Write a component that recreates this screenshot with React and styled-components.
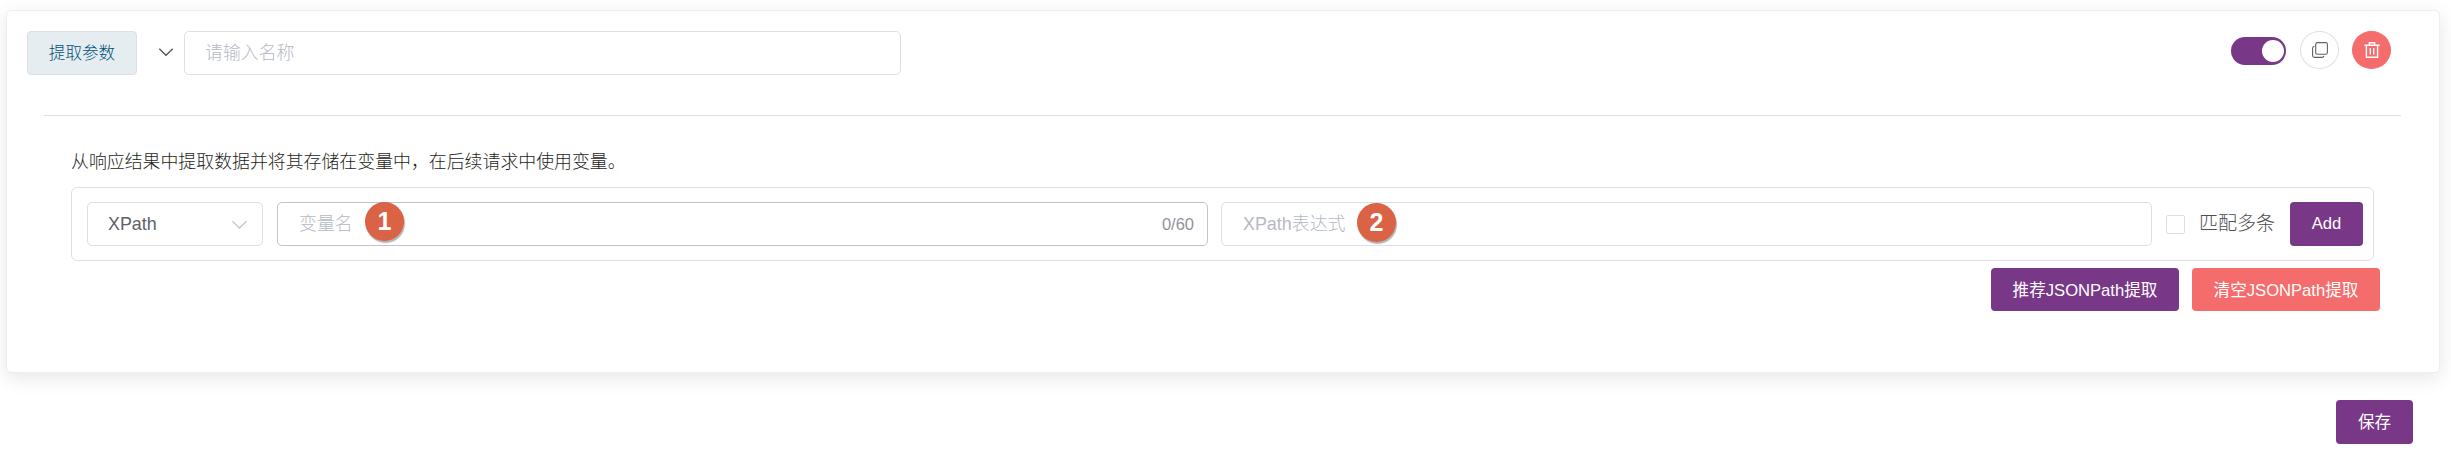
import React from "react";
import styled, { createGlobalStyle } from "styled-components";

const GlobalStyle = createGlobalStyle`
  *, *::before, *::after { box-sizing: border-box; }
  body {
    margin: 0;
    background: #fff;
    color: #1d1e20;
    font-family: "Liberation Sans", "Noto Sans CJK SC", sans-serif;
    font-size: 17.9px;
    font-weight: 300;
  }
`;

const Page = styled.main`
  height: 459px;
  padding: 10px 11px 0 6px;
  overflow: hidden;
`;

const Card = styled.section`
  height: 363px;
  border: 1px solid #ebeef5;
  border-radius: 5px;
  background: #fff;
  box-shadow: 0 5px 20px rgba(0, 0, 0, 0.1);
`;

const Header = styled.header`
  display: flex;
  align-items: flex-start;
  padding: 20px 48px 0 20px;
`;

const StepTag = styled.button`
  width: 110px;
  height: 44px;
  padding: 0 0 2px 0;
  border: 1px solid #dcdfe6;
  border-radius: 4px;
  background: #e6edf0;
  color: #00507c;
  font: inherit;
  font-size: 16.6px;
`;

const Chevron = styled.svg`
  flex: none;
  width: ${(p) => p.$size}px;
  height: ${(p) => p.$size}px;
  fill: none;
  stroke: ${(p) => p.$color};
  stroke-width: 1.2;
`;

const Collapse = styled.div`
  display: flex;
  justify-content: center;
  width: 47px;
  padding: 13px 0 0 11px;
`;

const Field = styled.div`
  position: relative;
  display: flex;
  align-items: center;
  justify-content: space-between;
  flex: ${(p) => (p.$width ? "none" : "1 1 0")};
  width: ${(p) => (p.$width ? `${p.$width}px` : "auto")};
  height: 44px;
  padding: 0 ${(p) => p.$right || 13}px 0 ${(p) => p.$left || 21}px;
  border: 1px solid ${(p) => (p.$hover ? "#c0c4cc" : "#dcdfe6")};
  border-radius: 5px;
  background: #fff;
  line-height: 42px;
  white-space: nowrap;
`;

const Select = styled(Field)`
  margin-right: 1px;
`;

const Placeholder = styled.span`
  color: #b4b9c3;
`;

const Value = styled.span`
  color: #606266;
`;

const Counter = styled.span`
  color: #909399;
  font-size: 16.5px;
`;

const Marker = styled.span`
  position: absolute;
  top: ${(p) => p.$top}px;
  left: ${(p) => p.$left}px;
  width: 39px;
  height: 39px;
  border-radius: 50%;
  background: #d96344;
  box-shadow: 1px 2px 1px rgba(0, 0, 0, 0.3);
  color: #fff;
  font-size: 25px;
  font-weight: 700;
  line-height: 38px;
  text-align: center;
`;

const Actions = styled.div`
  display: flex;
  align-items: center;
  margin-left: auto;
`;

const Switch = styled.div`
  display: flex;
  justify-content: flex-end;
  width: 55px;
  height: 28px;
  margin: 2px 14px 0 0;
  padding: 3px 2px;
  border-radius: 14px;
  background: #793787;
`;

const Knob = styled.span`
  width: 22px;
  height: 22px;
  border-radius: 50%;
  background: #fff;
`;

const RoundButton = styled.button`
  display: grid;
  place-items: center;
  width: 39px;
  height: 38px;
  margin-right: ${(p) => (p.$danger ? 0 : 13)}px;
  padding: 0;
  border: 1px solid ${(p) => (p.$danger ? "#f56c6c" : "#dcdfe6")};
  border-radius: 50%;
  background: ${(p) => (p.$danger ? "#f56c6c" : "#fff")};
  color: ${(p) => (p.$danger ? "#fff" : "#606266")};
`;

const Divider = styled.hr`
  height: 1px;
  margin: 40px 38px 0 37px;
  border: 0;
  background: #dcdfe6;
`;

const Body = styled.div`
  padding: 33px 59px 0 64px;
`;

const Description = styled.p`
  height: 26px;
  margin: 0 0 12px;
  line-height: 26px;
`;

const ExtractRow = styled.div`
  display: flex;
  align-items: center;
  width: 2303px;
  height: 74px;
  padding: 0 10px 0 15px;
  border: 1px solid #dcdfe6;
  border-radius: 6px;
`;

const Fields = styled.div`
  display: flex;
  flex: 1;
  gap: 13px;
`;

const CheckLabel = styled.label`
  display: flex;
  align-items: center;
  gap: 14px;
  margin: 0 15px 0 14px;
  color: #4c4e52;
  font-size: 19px;
  line-height: 42px;
`;

const CheckBox = styled.span`
  width: 19px;
  height: 19px;
  border: 1px solid #dcdfe6;
  border-radius: 2px;
  background: #fff;
`;

const Button = styled.button`
  width: ${(p) => p.$width}px;
  height: ${(p) => p.$height || 44}px;
  padding: 0 0 ${(p) => p.$lift || 0}px;
  border: 0;
  border-radius: 4px;
  background: ${(p) => (p.$danger ? "#f56c6c" : "#793787")};
  color: #fff;
  font: inherit;
  font-size: 16.6px;
  font-weight: 400;
  white-space: nowrap;
`;

const BulkActions = styled.div`
  display: flex;
  justify-content: flex-end;
  gap: 13px;
  margin-top: 7px;
`;

const Footer = styled.footer`
  display: flex;
  justify-content: flex-end;
  padding: 27px 27px 0 0;
`;

function ChevronDown({ size, color }) {
  return (
    <Chevron $size={size} $color={color} viewBox="0 0 16 16">
      <path d="M1.3 4.8 8 11.3 14.7 4.8" />
    </Chevron>
  );
}

function CopyIcon() {
  return (
    <svg width="16" height="16" viewBox="0 0 16 16" fill="none" stroke="currentColor" strokeWidth="1.1">
      <rect x="3.7" y="0.6" width="11.7" height="11.6" rx="1.8" />
      <path d="M2.5 4.3C1.2 4.5.6 5.1.6 6.2v7.4c0 1.1.7 1.8 1.8 1.8h7.5c1.1 0 1.7-.4 2-1.4" />
    </svg>
  );
}

function TrashIcon() {
  return (
    <svg width="16" height="16" viewBox="0 0 16 16" fill="none" stroke="currentColor" strokeWidth="1.4">
      <path d="M.4 3.2h15.2M5.4 3V.8h5.2V3M2.4 3.4v11.8h11.2V3.4M6.3 6v6.4M9.7 6v6.4" />
    </svg>
  );
}

export default function App() {
  return (
    <>
      <GlobalStyle />
      <Page>
        <Card>
          <Header>
            <StepTag>提取参数</StepTag>
            <Collapse>
              <ChevronDown size={16} color="#505256" />
            </Collapse>
            <Field $width={717} $left={20}>
              <Placeholder>请输入名称</Placeholder>
            </Field>
            <Actions>
              <Switch role="switch" aria-checked="true">
                <Knob />
              </Switch>
              <RoundButton>
                <CopyIcon />
              </RoundButton>
              <RoundButton $danger>
                <TrashIcon />
              </RoundButton>
            </Actions>
          </Header>
          <Divider />
          <Body>
            <Description>从响应结果中提取数据并将其存储在变量中，在后续请求中使用变量。</Description>
            <ExtractRow>
              <Fields>
                <Select $width={176} $left={20} $right={14}>
                  <Value>XPath</Value>
                  <ChevronDown size={17} color="#c0c4cc" />
                </Select>
                <Field $hover>
                  <Placeholder>变量名</Placeholder>
                  <Counter>0/60</Counter>
                  <Marker $top={-1} $left={87}>1</Marker>
                </Field>
                <Field>
                  <Placeholder>XPath表达式</Placeholder>
                  <Marker $top={0} $left={135}>2</Marker>
                </Field>
              </Fields>
              <CheckLabel>
                <CheckBox />
                匹配多条
              </CheckLabel>
              <Button $width={73}>Add</Button>
            </ExtractRow>
            <BulkActions>
              <Button $width={188} $height={43} $lift={2}>推荐JSONPath提取</Button>
              <Button $width={188} $height={43} $lift={2} $danger>清空JSONPath提取</Button>
            </BulkActions>
          </Body>
        </Card>
        <Footer>
          <Button $width={77} $lift={2}>保存</Button>
        </Footer>
      </Page>
    </>
  );
}
